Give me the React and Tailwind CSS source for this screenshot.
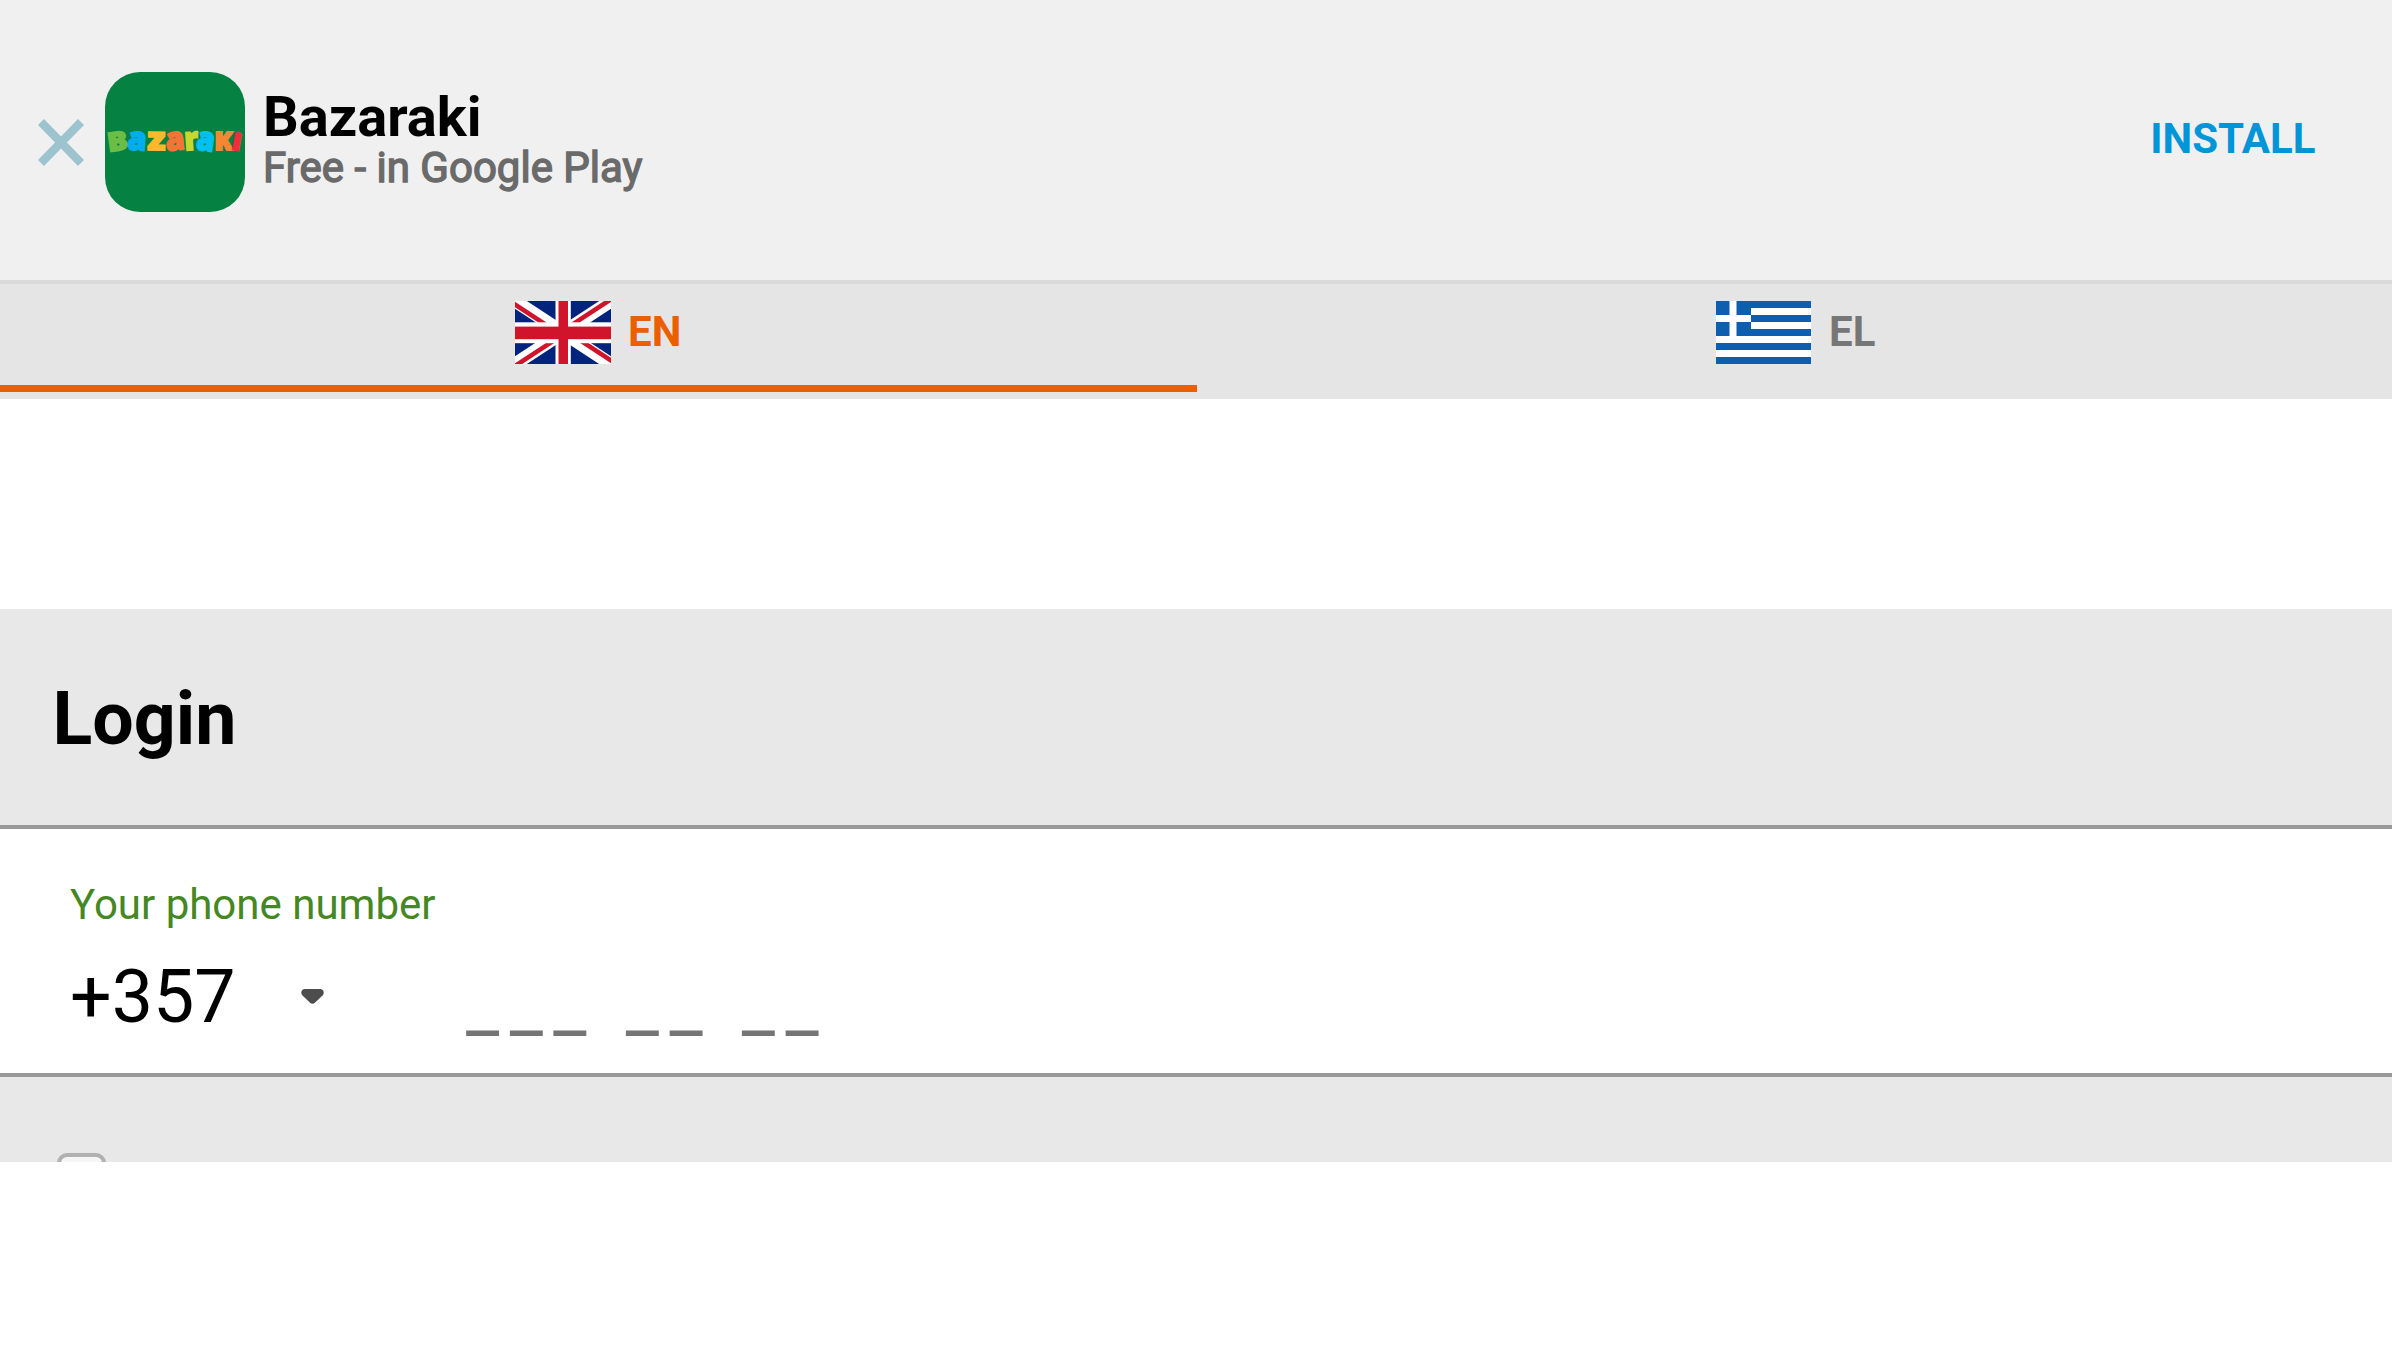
const LOGO_LETTERS = [
  { ch: 'B', x: 2.5, w: 20, y: 78.5, size: 26, fill: '#6cbd45', rot: -8 },
  { ch: 'a', x: 22.5, w: 19, y: 78, size: 32, fill: '#00aeef', rot: 4 },
  { ch: 'z', x: 42.5, w: 18, y: 78, size: 32, fill: '#fdb92b', rot: 1 },
  { ch: 'a', x: 60.5, w: 19, y: 78, size: 32, fill: '#f37435', rot: -6 },
  { ch: 'r', x: 79.5, w: 14, y: 78, size: 32, fill: '#c4d82e', rot: -4 },
  { ch: 'a', x: 91.5, w: 18, y: 78.5, size: 33, fill: '#00c0f3', rot: 8 },
  { ch: 'K', x: 109.5, w: 18, y: 78, size: 24, fill: '#f58634', rot: 0 },
  { ch: 'i', x: 127.5, w: 8.5, y: 78, size: 22, fill: '#ed2f3c', rot: 10 },
];

function AppIcon() {
  return (
    <svg viewBox="0 0 140 140" className="h-[140px] w-[140px] shrink-0 rounded-[35px] bg-[#058141]">
      {LOGO_LETTERS.map((l, i) => (
        <text
          key={i}
          x={l.x}
          y={l.y}
          fontSize={l.size}
          fontWeight="800"
          fontFamily="Open Sans, sans-serif"
          textLength={l.w}
          lengthAdjust="spacingAndGlyphs"
          fill={l.fill}
          stroke={l.fill}
          strokeWidth="1.8"
          transform={`rotate(${l.rot} ${l.x + l.w / 2} 70)`}
        >
          {l.ch}
        </text>
      ))}
    </svg>
  );
}

function FlagUK() {
  return (
    <svg viewBox="0 0 96 63" className="h-[63px] w-[96px]">
      <rect width="96" height="63" fill="#00247d" />
      <path d="M0 0L96 63M96 0L0 63" stroke="#fff" strokeWidth="13" />
      <path d="M-2 2.2L46 33.7M98 -3.1L50 28.4M-2 66.3L46 34.8M98 60.8L50 29.3" stroke="#cf142b" strokeWidth="4.6" />
      <rect x="40.5" width="15.3" height="63" fill="#fff" />
      <rect y="21.3" width="96" height="20.9" fill="#fff" />
      <rect x="43.5" width="9.5" height="63" fill="#cf142b" />
      <rect y="25.6" width="96" height="12.6" fill="#cf142b" />
    </svg>
  );
}

function FlagGreece() {
  return (
    <svg viewBox="0 0 95 63" className="h-[63px] w-[95px]">
      <rect width="95" height="63" fill="#0d5eaf" />
      <path d="M35 10.5H95M35 24.5H95M0 38.5H95M0 52.5H95M0 17.5H35M17 0V35" stroke="#fff" strokeWidth="7" />
    </svg>
  );
}

export default function App() {
  return (
    <div className="flex h-[1356px] w-[2392px] flex-col overflow-hidden bg-white font-['Roboto',sans-serif] text-black">
      <header className="flex h-[284px] shrink-0 items-start border-b-4 border-[#dadada] bg-[#f0f0f0] pt-[72px] pr-[76.5px] pl-[38px]">
        <svg viewBox="0 0 46 47" className="mt-[47px] mr-[21px] h-[47px] w-[46px] shrink-0" stroke="#9dc3cf" strokeWidth="8.4">
          <path d="M3 3L43 44M43 3L3 44" />
        </svg>
        <AppIcon />
        <div className="ml-[18px] flex grow flex-col pt-[17px] whitespace-nowrap">
          <span className="text-[56px] leading-[56px] font-bold">Bazaraki</span>
          <span className="text-[42px] leading-[45px] text-[#6a6a6a] [-webkit-text-stroke:1.4px_#6a6a6a]">Free - in Google Play</span>
        </div>
        <a className="mt-[42px] text-[42px] leading-[49px] font-bold text-[#0095d9]">INSTALL</a>
      </header>

      <nav className="grid h-[115px] shrink-0 grid-cols-[1197px_1fr] bg-[#e5e5e5] pb-[7px] text-[42px] font-bold">
        <div className="flex justify-start gap-[17px] border-b-7 border-[#eb5f00] pt-[17px] pl-[515px] text-[#eb5f00]">
          <FlagUK />
          <span className="mt-[6px] leading-[49px]">EN</span>
        </div>
        <div className="flex justify-start gap-[18px] pt-[17px] pl-[519px] text-[#767676]">
          <FlagGreece />
          <span className="mt-[6px] leading-[49px]">EL</span>
        </div>
      </nav>

      <div className="h-[210px] shrink-0" />

      <main className="h-[553px] shrink-0 overflow-hidden bg-[#e8e8e8]">
        <h1 className="h-[216px] pt-[68px] pl-[52.5px] text-[73.5px] leading-[84px] font-bold">Login</h1>
        <section className="h-[252px] border-y-4 border-[#999] bg-white pt-[51px] pl-[70px]">
          <label className="block text-[42px] leading-[49px] text-[#458722]">Your phone number</label>
          <div className="mt-[26px] flex h-[84px] text-[73.5px] leading-[84px]">
            <span className="w-[231px]">+357</span>
            <svg viewBox="0 0 23 15" className="mt-[34px] h-[15px] w-[23px]" fill="#4d4d4d">
              <path d="M4 0H19C22.5 0 24 4 21.500 6.500L14.200 13.500Q11.500 16 8.800 13.500L1.500 6.500C-1 4 .5 0 4 0Z" />
            </svg>
            <span className="mt-[8px] ml-[142px] tracking-[10.5px] text-[#757575]">___ __ __</span>
          </div>
        </section>
        <div className="pt-[76px] pl-[57px]">
          <div className="h-[49px] w-[49px] rounded-[10px] border-4 border-[#b1b1b1] bg-[#f6f6f6]" />
        </div>
      </main>
    </div>
  );
}
